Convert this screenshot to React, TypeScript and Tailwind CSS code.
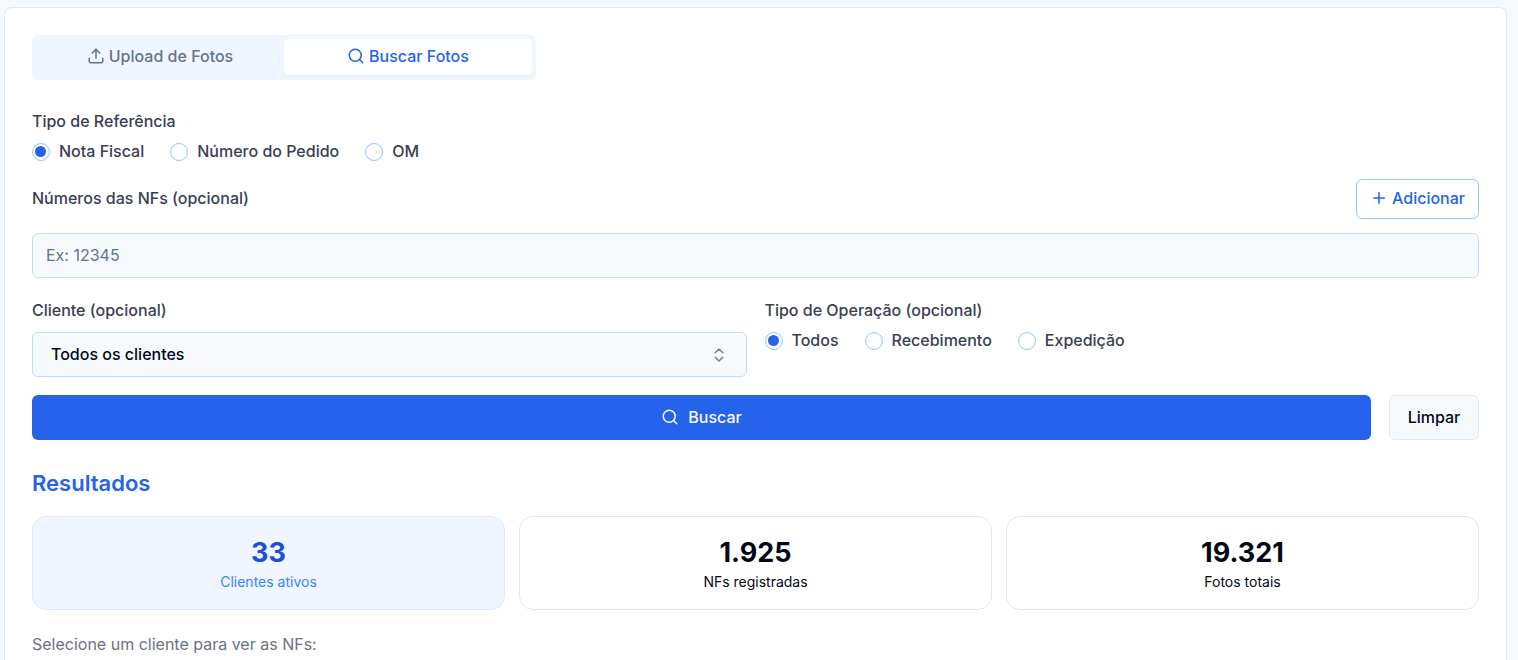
import React, { useState } from 'react'
import { ChevronsUpDown, Plus, Search, Upload } from 'lucide-react'

const referenceTypes = ['Nota Fiscal', 'Número do Pedido', 'OM']
const operationTypes = ['Todos', 'Recebimento', 'Expedição']

const stats = [
    { value: '33', label: 'Clientes ativos', active: true },
    { value: '1.925', label: 'NFs registradas', active: false },
    { value: '19.321', label: 'Fotos totais', active: false },
]

type RadioRowProps = {
    legend: string
    name: string
    options: string[]
}

function RadioRow({ legend, name, options }: RadioRowProps) {
    const [selected, setSelected] = useState(options[0])

    return (
        <fieldset>
            <legend className="mb-2 leading-7">{legend}</legend>
            <div className="flex flex-wrap gap-x-[26px] gap-y-2">
                {options.map((option) => (
                    <label key={option} className="flex items-start gap-[9px] leading-4">
                        <input
                            type="radio"
                            name={name}
                            value={option}
                            checked={selected === option}
                            onChange={() => setSelected(option)}
                            className="flex size-[18px] shrink-0 appearance-none rounded-full border border-[#93c5fd] bg-white p-[2px] checked:before:size-[11px] checked:before:rounded-full checked:before:bg-[#2563eb] checked:before:content-['']"
                        />
                        {option}
                    </label>
                ))}
            </div>
        </fieldset>
    )
}

function Tabs() {
    return (
        <div role="tablist" className="grid h-[45px] max-w-[504px] grid-cols-2 rounded-md bg-[#eff6ff] px-1 pt-1 pb-[5px] text-[#64748b]">
            <button type="button" role="tab" aria-selected="false" className="flex items-center justify-center gap-1 rounded-sm pb-[2px]">
                <Upload size={18} />
                Upload de Fotos
            </button>
            <button type="button" role="tab" aria-selected="true" className="flex items-center justify-center gap-1 rounded-sm bg-white pb-[2px] text-[#2563eb] shadow-xs">
                <Search size={18} />
                Buscar Fotos
            </button>
        </div>
    )
}

function SearchForm() {
    return (
        <form className="mt-[27px] flex flex-col gap-[18px] text-[#374151]" onSubmit={(e) => e.preventDefault()}>
            <RadioRow legend="Tipo de Referência" name="reference" options={referenceTypes} />

            <div>
                <div className="mb-[14px] flex items-center justify-between">
                    <label htmlFor="nfs" className="pb-[2px]">Números das NFs (opcional)</label>
                    <button type="button" className="flex h-10 items-center gap-1 rounded-md border border-[#93c5fd] bg-white px-[13px] pb-[2px] text-[#2563eb]">
                        <Plus size={18} />
                        Adicionar
                    </button>
                </div>
                <input
                    id="nfs"
                    type="text"
                    placeholder="Ex: 12345"
                    className="block h-[45px] w-full rounded-md border border-[#bfdbfe] bg-[#f7fafd] px-[13px] pb-[2px] font-normal placeholder:text-[#64748b]"
                />
            </div>

            <div className="grid grid-cols-1 gap-[18px] md:grid-cols-2">
                <div>
                    <label htmlFor="cliente" className="mb-2 block leading-7">Cliente (opcional)</label>
                    <div className="relative">
                        <select id="cliente" className="block h-[45px] w-full appearance-none rounded-md border border-[#bfdbfe] bg-[#f7fafd] pr-12 pb-[2px] pl-[18px] text-[#020817]">
                            <option>Todos os clientes</option>
                        </select>
                        <ChevronsUpDown size={18} className="pointer-events-none absolute inset-y-0 right-[19px] my-auto text-[#020817] opacity-50" />
                    </div>
                </div>
                <RadioRow legend="Tipo de Operação (opcional)" name="operation" options={operationTypes} />
            </div>

            <div className="flex gap-[18px]">
                <button type="submit" className="flex h-[45px] flex-1 items-center justify-center gap-[9px] rounded-md bg-[#2563eb] pb-[2px] text-[#f8fafc]">
                    <Search size={18} />
                    Buscar
                </button>
                <button type="reset" className="h-[45px] w-[90px] rounded-md border border-[#e2e8f0] bg-[#f7fafd] pb-[2px] text-[#020817]">
                    Limpar
                </button>
            </div>
        </form>
    )
}

function Results() {
    return (
        <section className="mt-[27px]">
            <h2 className="mb-[17px] text-[22px] leading-8 font-semibold text-[#2563eb]">Resultados</h2>
            <div className="grid grid-cols-1 gap-[14px] sm:grid-cols-3">
                {stats.map((stat) => (
                    <div
                        key={stat.label}
                        className={
                            stat.active
                                ? 'rounded-[14px] border border-[#dbeafe] bg-[#eff6ff] pt-[18px] pb-4 text-center text-[#3b82f6]'
                                : 'rounded-[14px] border border-[#e2e8f0] bg-white pt-[18px] pb-4 text-center text-[#020817]'
                        }
                    >
                        <p className={stat.active ? 'text-[27px] leading-9 font-bold text-[#1d4ed8]' : 'text-[27px] leading-9 font-bold'}>
                            {stat.value}
                        </p>
                        <p className="text-[14px] leading-[22px] font-normal">{stat.label}</p>
                    </div>
                ))}
            </div>
            <p className="mt-5 leading-7 font-normal text-[#6b7280]">Selecione um cliente para ver as NFs:</p>
        </section>
    )
}

export default function App() {
    return (
        <div className="flex min-h-screen flex-col bg-[#f7fafd] pt-[7px] pr-[11px] pl-1 font-['Inter',sans-serif] text-[16px] leading-6 font-medium">
            <main className="flex-1 rounded-t-lg border border-b-0 border-[#dbeafe] bg-white px-[27px] pt-[27px]">
                <Tabs />
                <SearchForm />
                <Results />
            </main>
        </div>
    )
}
